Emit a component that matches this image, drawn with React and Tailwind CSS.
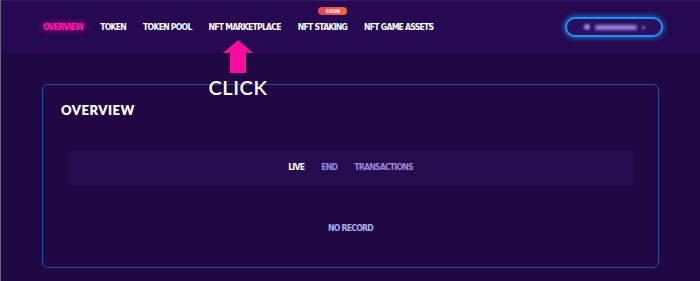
import React from "react";

const navItems = [
  { label: "Overview", active: true },
  { label: "Token" },
  { label: "Token Pool" },
  { label: "NFT Marketplace" },
  { label: "NFT Staking", soon: true },
  { label: "NFT Game Assets" },
];

function Header() {
  return (
    <header className="relative h-[53px] border-t border-[#3a1a6a] bg-[#260950]">
      <div className="flex h-full items-center justify-between pl-[42px] pr-[37px]">
        <nav className="flex items-center gap-[17px] font-['DejaVu_Sans_Condensed',sans-serif] text-[8.6px] font-bold uppercase tracking-[-0.75px]">
          {navItems.map((item) => (
            <div key={item.label} className="relative">
              {item.soon && (
                <span className="absolute -top-[14px] right-0 rounded-full bg-gradient-to-r from-[#e8405a] to-[#f06a3a] px-[7px] py-[1px] text-[5px] leading-[6px] tracking-normal text-white">
                  Soon
                </span>
              )}
              <span
                className={
                  item.active
                    ? "text-[#ff1aa8] [text-shadow:0_0_6px_#ff1aa8]"
                    : "text-white"
                }
              >
                {item.label}
              </span>
            </div>
          ))}
        </nav>

        {/* wallet button (blurred address) */}
        <button className="flex h-[20px] w-[98px] items-center justify-center gap-[5px] rounded-full border-2 border-[#1e90f0] bg-[#2a1060] shadow-[0_0_6px_#1e90f0]">
          <span className="h-[6px] w-[6px] rounded-full bg-[#9a86e0] blur-[1px]" />
          <span className="h-[5px] w-[42px] rounded bg-[#9a86e0] blur-[1.5px]" />
          <span className="h-[3px] w-[3px] rounded-full bg-[#9a86e0] blur-[1px]" />
        </button>
      </div>

      {/* arrow callout */}
      <div className="absolute left-[208px] top-[39px] z-10 flex w-[58px] flex-col items-center">
        <svg width="30" height="33" viewBox="0 0 30 33">
          <polygon points="15,0 30,13 23,13 23,33 7,33 7,13 0,13" fill="#ff0a9a" />
        </svg>
        <span className="mt-[4px] font-['Lato',sans-serif] text-[20px] font-semibold leading-[20px] tracking-[0.6px] text-white">
          CLICK
        </span>
      </div>
    </header>
  );
}

export default function App() {
  return (
    <div className="h-[281px] w-[700px] overflow-hidden border-l border-[#6a6080] bg-[#200843]">
      <Header />
      <main className="px-[41px] pt-[31px]">
        <section className="h-[184px] rounded-[6px] border border-[#1f4fa0] bg-[#210844] px-[25px] pt-[16px]">
          <h2 className="-ml-[7px] font-['Lato',sans-serif] text-[13px] font-extrabold uppercase tracking-[0.5px] text-white">
            Overview
          </h2>
          <div className="mt-[30px] flex h-[34px] items-center justify-center gap-[17px] bg-[#250c4f] font-['DejaVu_Sans_Condensed',sans-serif] text-[8.6px] font-bold uppercase tracking-[-0.75px]">
            <span className="text-white">Live</span>
            <span className="text-[#9a88d8]">End</span>
            <span className="text-[#9a88d8]">Transactions</span>
          </div>
          <p className="mt-[37px] text-center font-['DejaVu_Sans_Condensed',sans-serif] text-[8.6px] font-bold uppercase tracking-[-0.75px] text-[#a8b0e8]">
            No record
          </p>
        </section>
      </main>
    </div>
  );
}
